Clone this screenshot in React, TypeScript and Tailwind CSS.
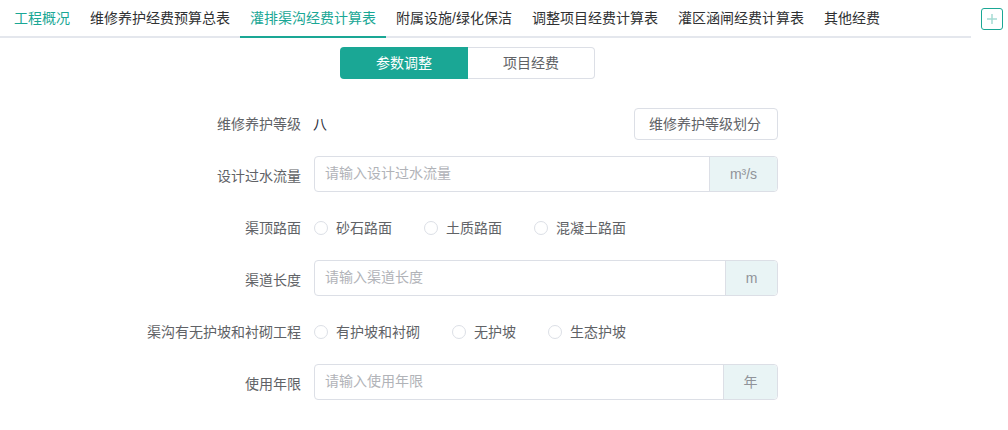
import React from "react";

const FONT = { fontFamily: '"Liberation Sans", "Noto Sans CJK SC", sans-serif' };

const tabs = [
  { label: "工程概况", color: "text-[#1aa795]" },
  { label: "维修养护经费预算总表", color: "text-[#303133]" },
  { label: "灌排渠沟经费计算表", color: "text-[#1aa795]", active: true },
  { label: "附属设施/绿化保洁", color: "text-[#303133]" },
  { label: "调整项目经费计算表", color: "text-[#303133]" },
  { label: "灌区涵闸经费计算表", color: "text-[#303133]" },
  { label: "其他经费", color: "text-[#303133]" },
];

function Label({ children }: { children: React.ReactNode }) {
  return <div className="w-[302px] shrink-0 pr-[1px] text-right text-[14px] leading-[20px] text-[#606266]">{children}</div>;
}

function InputRow({ label, placeholder, unit, unitW }: { label: string; placeholder: string; unit: string; unitW: string }) {
  return (
    <div className="flex h-[36px] items-center">
      <div className="pt-[4px]">
        <Label>{label}</Label>
      </div>
      <div className="ml-[12px] flex h-[36px] w-[464px] rounded-[4px] border border-[#dcdfe6] bg-white">
        <div className="flex flex-1 items-center pb-[2px] pl-[10px] text-[14px] text-[#b1b3b8]">{placeholder}</div>
        <div className={`flex items-center justify-center rounded-r-[4px] border-l border-[#dcdfe6] bg-[#e9f4f5] text-[14px] text-[#909399] ${unitW}`}>{unit}</div>
      </div>
    </div>
  );
}

function RadioRow({ label, options }: { label: string; options: { text: string; w: string }[] }) {
  return (
    <div className="flex h-[36px] translate-y-[2px] items-center">
      <Label>{label}</Label>
      <div className="ml-[12px] flex items-center">
        {options.map((o) => (
          <div key={o.text} className={`flex items-center ${o.w}`}>
            <span className="h-[14px] w-[14px] rounded-full border border-[#dcdfe6] bg-white" />
            <span className="ml-[8px] text-[14px] leading-[20px] text-[#606266]">{o.text}</span>
          </div>
        ))}
      </div>
    </div>
  );
}

export default function App() {
  return (
    <div className="h-[430px] w-[1008px] overflow-hidden bg-white" style={FONT}>
      <div className="flex items-start">
        <div className="flex h-[38px] w-[971px] border-b-2 border-[#e4e7ed] pl-[4px]">
          {tabs.map((t) => (
            <div
              key={t.label}
              className={`h-[38px] px-[10px] pt-[7px] text-[14px] leading-[22px] whitespace-nowrap ${t.color} ${t.active ? "border-b-2 border-[#1aa795]" : ""}`}
            >
              {t.label}
            </div>
          ))}
        </div>
        <div className="ml-[10px] mt-[8px] flex h-[22px] w-[22px] items-center justify-center rounded-[3px] border border-[#1aa795] bg-white">
          <svg width="10" height="10" viewBox="0 0 10 10">
            <path d="M5 0v10M0 5h10" stroke="#a5dcd4" strokeWidth="1.5" />
          </svg>
        </div>
      </div>

      <div className="mt-[9px] flex pl-[340px]">
        <div className="flex h-[32px] w-[128px] items-center justify-center rounded-l-[4px] bg-[#1aa795] text-[14px] text-white">参数调整</div>
        <div className="flex h-[32px] w-[127px] items-center justify-center rounded-r-[4px] border border-l-0 border-[#dcdfe6] text-[14px] text-[#606266]">项目经费</div>
      </div>

      <div className="mt-[29px] flex flex-col gap-[16px]">
        <div className="flex h-[32px] items-center">
          <Label>维修养护等级</Label>
          <div className="ml-[11px] flex flex-1 items-center pr-[230px]">
            <span className="flex-1 text-[14px] text-[#1f2937]">八</span>
            <button className="h-[32px] w-[144px] rounded-[4px] border border-[#dcdfe6] bg-white pr-[2px] text-[14px] text-[#606266]">维修养护等级划分</button>
          </div>
        </div>
        <InputRow label="设计过水流量" placeholder="请输入设计过水流量" unit="m³/s" unitW="w-[68px]" />
        <RadioRow
          label="渠顶路面"
          options={[
            { text: "砂石路面", w: "w-[110px]" },
            { text: "土质路面", w: "w-[110px]" },
            { text: "混凝土路面", w: "w-[110px]" },
          ]}
        />
        <InputRow label="渠道长度" placeholder="请输入渠道长度" unit="m" unitW="w-[52px]" />
        <RadioRow
          label="渠沟有无护坡和衬砌工程"
          options={[
            { text: "有护坡和衬砌", w: "w-[138px]" },
            { text: "无护坡", w: "w-[96px]" },
            { text: "生态护坡", w: "w-[96px]" },
          ]}
        />
        <InputRow label="使用年限" placeholder="请输入使用年限" unit="年" unitW="w-[54px]" />
      </div>
    </div>
  );
}
